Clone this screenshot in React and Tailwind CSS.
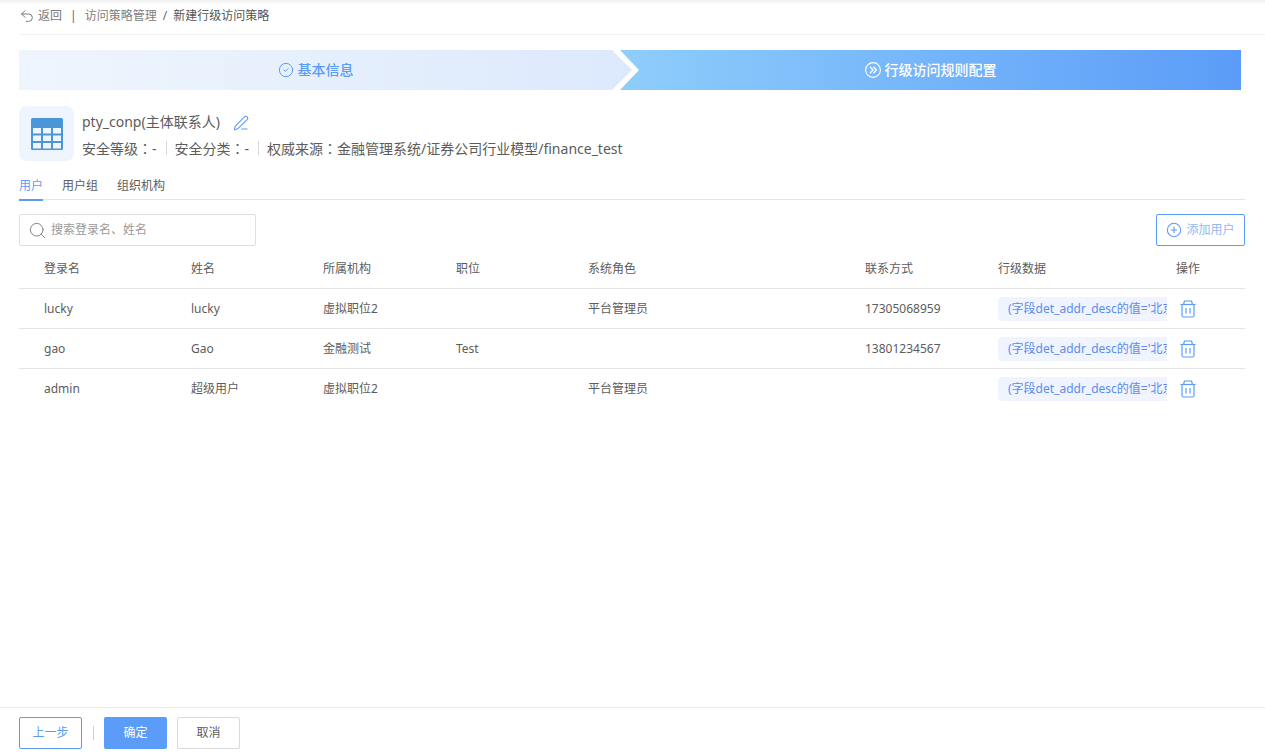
import { CircleCheck, CirclePlus, PenLine, Search, Undo2 } from "lucide-react";

const rows = [
    { login: "lucky", name: "lucky", org: "虚拟职位2", title: "", role: "平台管理员", phone: "17305068959" },
    { login: "gao", name: "Gao", org: "金融测试", title: "Test", role: "", phone: "13801234567" },
    { login: "admin", name: "超级用户", org: "虚拟职位2", title: "", role: "平台管理员", phone: "" },
];

const columns = "grid grid-cols-[147px_132px_133px_132px_277px_133px_178px_1fr] pl-[25px] items-center";

function TableIcon() {
    return (
        <svg width="32" height="32" viewBox="0 0 32 32">
            <rect x="0" y="0" width="32" height="32" rx="1.5" fill="#4a96d8" />
            <g fill="#eef5fe">
                <rect x="2" y="10" width="8" height="5.5" />
                <rect x="12" y="10" width="8" height="5.5" />
                <rect x="22" y="10" width="8" height="5.5" />
                <rect x="2" y="17.5" width="8" height="5.5" />
                <rect x="12" y="17.5" width="8" height="5.5" />
                <rect x="22" y="17.5" width="8" height="5.5" />
                <rect x="2" y="25" width="8" height="5.5" />
                <rect x="12" y="25" width="8" height="5.5" />
                <rect x="22" y="25" width="8" height="5.5" />
            </g>
        </svg>
    );
}

function TrashIcon() {
    return (
        <svg width="16" height="18" viewBox="0 0 16 18" fill="none" stroke="#5b9cf8" strokeWidth="1.2">
            <path d="M0.5 4.5H15.5" />
            <path d="M3.5 4.5L4.5 1H11.5L12.5 4.5" />
            <path d="M2 4.5V15.5C2 16.4 2.6 17 3.5 17H12.5C13.4 17 14 16.4 14 15.5V4.5" />
            <path d="M6 8V13.5M10 8V13.5" />
        </svg>
    );
}

function DoubleChevronIcon() {
    return (
        <svg width="16" height="16" viewBox="0 0 16 16" fill="none" stroke="white" strokeWidth="1.1">
            <circle cx="8" cy="8" r="7.4" />
            <path d="M5 4.8L8 8L5 11.2" strokeWidth="1.3" />
            <path d="M8.4 4.8L11.4 8L8.4 11.2" strokeWidth="1.3" />
        </svg>
    );
}

function Divider() {
    return <span className="ml-[9px] mr-[8px] inline-block h-[14px] w-px bg-[#d8d8d8]" />;
}

// Deux-points centre, comme sur la capture
function Colon() {
    return <span className="font-['Noto_Sans_CJK_TC',sans-serif]">：</span>;
}

export default function App() {
    return (
        <div className="flex h-[756px] w-[1265px] flex-col overflow-hidden bg-white font-['Noto_Sans','Noto_Sans_CJK_SC',sans-serif] text-xs text-[#5c5c5c]">
            {/* Fil d'Ariane */}
            <div className="h-[35px] bg-gradient-to-b from-[#efefef] via-white via-[12%] to-white pl-[19px]">
                <div className="flex h-[35px] items-center border-b border-[#f1f2f8] pb-[2px]">
                    <Undo2 size={16} strokeWidth={1.3} className="text-[#666]" />
                    <span className="ml-[3px] text-[#777]">返回</span>
                    <span className="ml-[8px] text-[#666]">|</span>
                    <span className="ml-[8px] text-[#808080]">访问策略管理</span>
                    <span className="ml-[6px] text-[#666]">/</span>
                    <span className="ml-[6px] text-[#555]">新建行级访问策略</span>
                </div>
            </div>

            <div className="flex flex-1 flex-col pl-[19px] pr-[20px]">
                {/* Etapes */}
                <div className="mt-[15px] flex h-[40px] w-[1222px]">
                    <div className="flex h-full w-[613px] items-center justify-center gap-[4px] bg-gradient-to-r from-[#eff5fd] to-[#dce9fc] pr-[20px] text-sm font-medium text-[#5b9cf8] [clip-path:polygon(0_0,593px_0,613px_50%,593px_100%,0_100%)]">
                        <CircleCheck size={16} strokeWidth={1.5} />
                        <span>基本信息</span>
                    </div>
                    <div className="ml-[-12px] flex h-full w-[621px] items-center justify-center gap-[4px] bg-gradient-to-r from-[#8fcdfb] to-[#5b9cf8] text-sm font-medium text-white [clip-path:polygon(0_0,100%_0,100%_100%,0_100%,19px_50%)]">
                        <DoubleChevronIcon />
                        <span>行级访问规则配置</span>
                    </div>
                </div>

                {/* Infos table */}
                <div className="mt-[16px] flex">
                    <div className="flex h-[55px] w-[55px] items-center justify-center rounded-lg bg-[#eef5fe]">
                        <TableIcon />
                    </div>
                    <div className="ml-[8px]">
                        <div className="flex h-[32px] items-center text-sm">
                            <span>pty_conp(主体联系人)</span>
                            <PenLine size={16} strokeWidth={1.6} className="ml-[13px] mt-[2px] text-[#5b9cf8]" />
                        </div>
                        <div className="flex h-[20px] items-center text-sm">
                            <span>安全等级<Colon />-</span>
                            <Divider />
                            <span>安全分类<Colon />-</span>
                            <Divider />
                            <span>权威来源<Colon />金融管理系统/证券公司行业模型/finance_test</span>
                        </div>
                    </div>
                </div>

                {/* Onglets */}
                <div className="mt-[13px] flex h-[26px] items-center gap-[19px] border-b border-[#e4e4e4] pb-[2px]">
                    <span className="relative text-[#5b9cf8]">
                        用户
                        <span className="absolute bottom-[-7px] left-0 h-[2px] w-full bg-[#5b9cf8]" />
                    </span>
                    <span>用户组</span>
                    <span>组织机构</span>
                </div>

                {/* Recherche */}
                <div className="mt-[14px] flex items-center justify-between">
                    <div className="flex h-[32px] w-[237px] items-center rounded-[2px] border border-[#dcdfe6] pl-[8px] text-[#9a9a9a]">
                        <Search size={19} strokeWidth={1} className="text-[#666]" />
                        <span className="ml-[4px]">搜索登录名、姓名</span>
                    </div>
                    <button className="flex h-[32px] w-[89px] items-center justify-center gap-[4px] rounded-[2px] border border-[#5b9cf8] text-[#8fb8f5]">
                        <CirclePlus size={16} strokeWidth={1.6} className="text-[#5b9cf8]" />
                        添加用户
                    </button>
                </div>

                {/* Tableau */}
                <div className={`${columns} mt-[2px] h-[41px] border-b border-[#e4e4e4] pt-[1px]`}>
                    <span>登录名</span>
                    <span>姓名</span>
                    <span>所属机构</span>
                    <span>职位</span>
                    <span>系统角色</span>
                    <span>联系方式</span>
                    <span>行级数据</span>
                    <span>操作</span>
                </div>
                {rows.map((row, i) => (
                    <div
                        key={row.login}
                        className={`${columns} h-[40px] ${i < rows.length - 1 ? "border-b border-[#e4e4e4]" : ""}`}
                    >
                        <span>{row.login}</span>
                        <span>{row.name}</span>
                        <span>{row.org}</span>
                        <span>{row.title}</span>
                        <span>{row.role}</span>
                        <span>{row.phone}</span>
                        <div className="h-[24px] w-[169px] overflow-hidden whitespace-nowrap rounded-l bg-[#eff4fe] pl-[10px] leading-[24px] text-[#5b8cf0]">
                            (字段det_addr_desc的值='北京市朝阳区')
                        </div>
                        <div className="pl-[4px]">
                            <TrashIcon />
                        </div>
                    </div>
                ))}
            </div>

            {/* Pied de page */}
            <div className="flex h-[49px] items-center border-t border-[#eaeaea] pl-[19px] pt-[1px]">
                <button className="h-[32px] w-[63px] rounded-[2px] border border-[#5b9cf8] text-[#5b9cf8]">上一步</button>
                <span className="ml-[11px] h-[14px] w-px bg-[#d0d0d0]" />
                <button className="ml-[10px] h-[32px] w-[63px] rounded-[2px] bg-[#5b9cf8] text-white">确定</button>
                <button className="ml-[10px] h-[32px] w-[63px] rounded-[2px] border border-[#d9d9d9]">取消</button>
            </div>
        </div>
    );
}
